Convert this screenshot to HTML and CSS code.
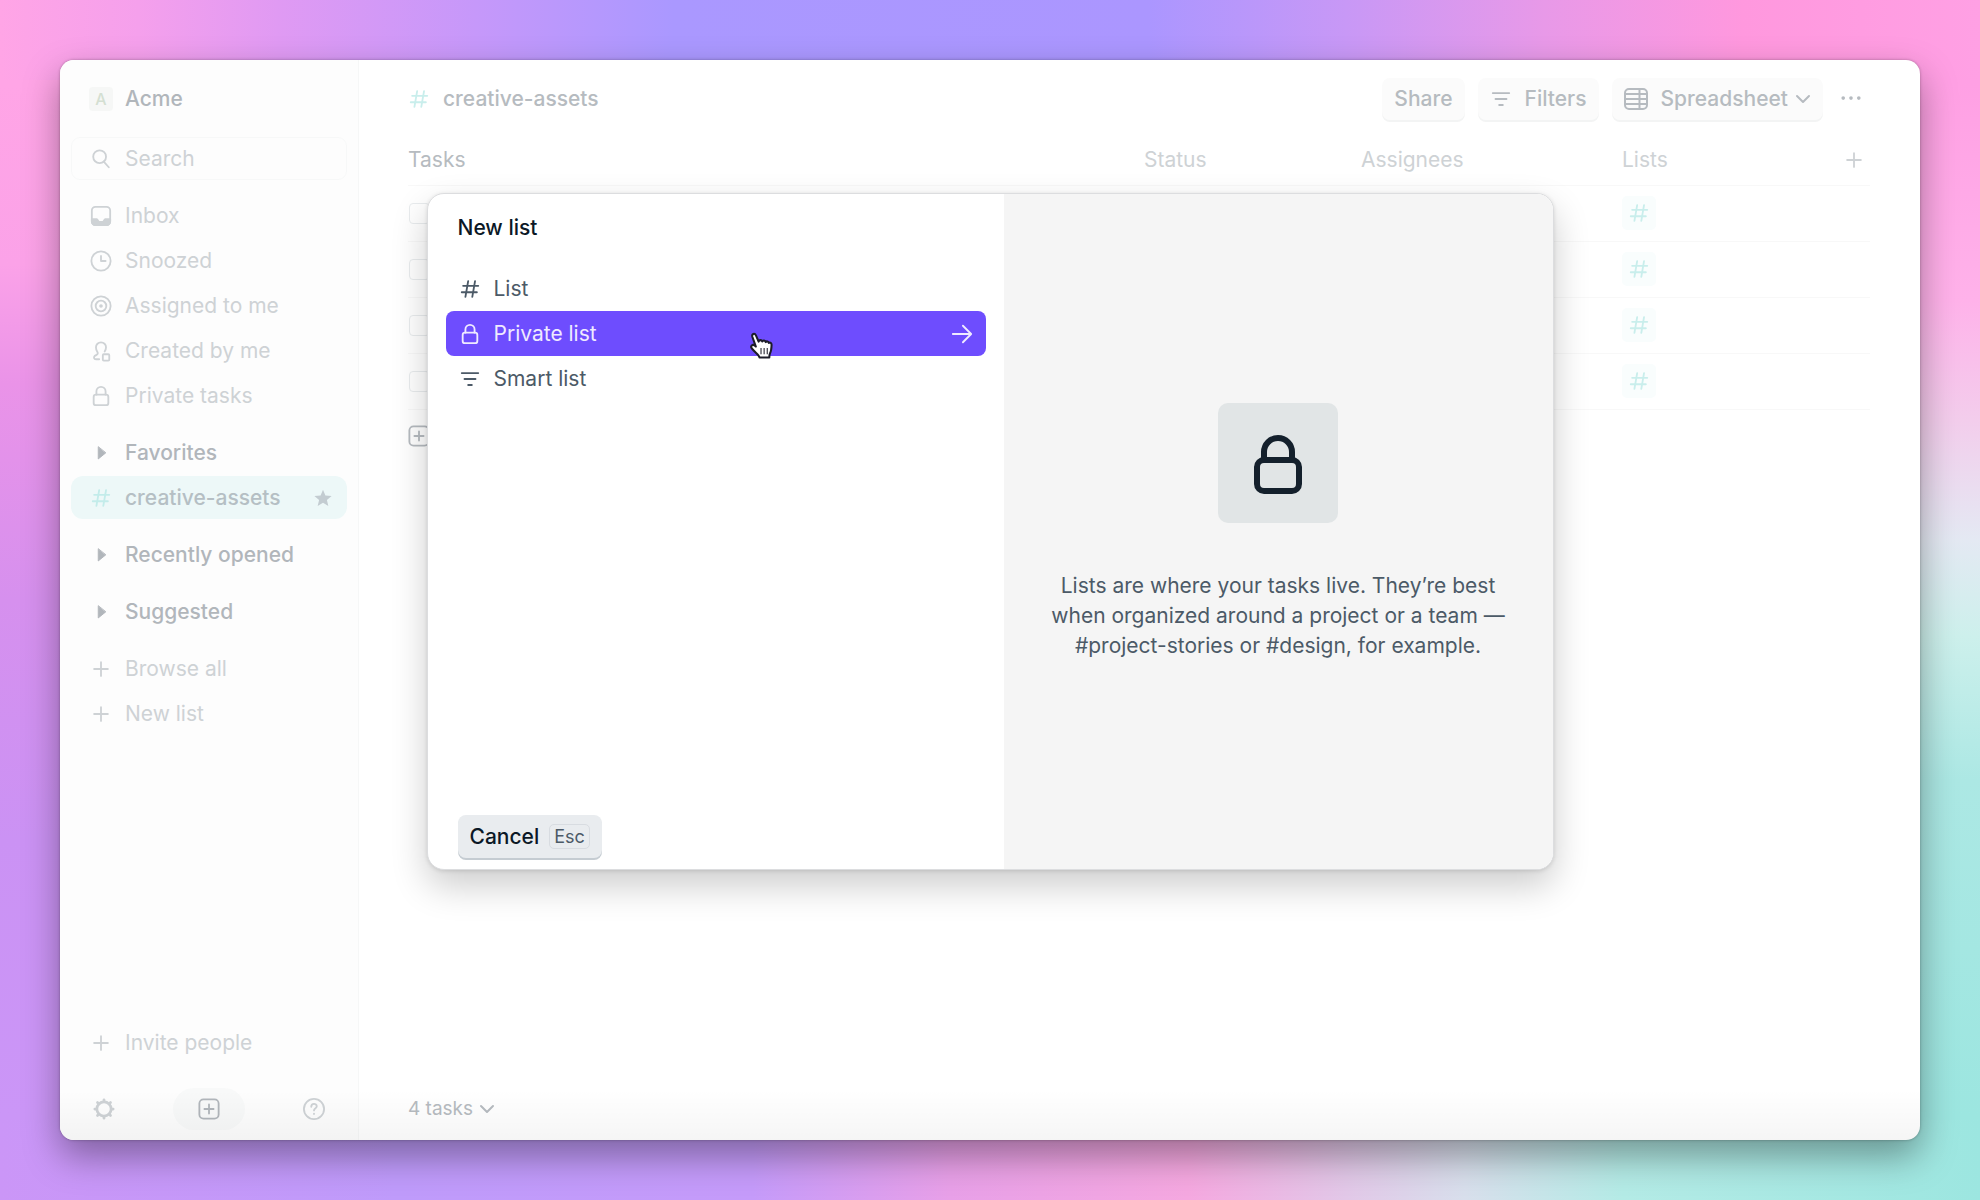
FILE: index.html
```
<!DOCTYPE html>
<html lang="en">
<head>
    <meta charset="UTF-8">
    <title>creative-assets</title>
    <link rel="stylesheet" href="styles.css">
</head>
<body>

    <!-- shared icons -->
    <svg class="sprite" aria-hidden="true">
        <symbol id="hash" viewBox="0 0 24 24"><path d="M10 3.500 7 20.500M17.500 3.500l-3 17M4.500 8.500h16.500M3 15.500h16.500"/></symbol>
        <symbol id="lock" viewBox="0 0 24 24"><rect x="4" y="10.500" width="16" height="11.500" rx="2.500"/><path d="M7 10.500V7a5 5 0 0 1 10 0v3.500"/></symbol>
        <symbol id="filter" viewBox="0 0 24 24"><path d="M3 5.500h18M6 12h12M10 18.500h4"/></symbol>
        <symbol id="plus" viewBox="0 0 24 24"><path d="M12 4.500v15M4.500 12h15"/></symbol>
        <symbol id="plus-box" viewBox="0 0 24 24"><rect x="1.500" y="1.500" width="21" height="21" rx="4.500"/><path d="M12 7v10M7 12h10"/></symbol>
        <symbol id="chevron" viewBox="0 0 16 16"><path d="M2 5l6 6 6-6"/></symbol>
        <symbol id="triangle" viewBox="0 0 24 24"><path d="M9 5.500v13l8-6.500z"/></symbol>
    </svg>

    <div class="window">

        <aside class="sidebar">
            <button class="nav-item workspace"><span class="avatar">A</span>Acme</button>

            <label class="search">
                <svg class="icon" viewBox="0 0 24 24"><circle cx="10.500" cy="9.500" r="7"/><path d="M15 14.800 20.500 21"/></svg>
                <input type="text" placeholder="Search" aria-label="Search">
            </label>

            <nav>
                <a class="nav-item" href="#inbox">
                    <svg class="icon" viewBox="0 0 24 24"><rect x="2" y="2" width="20" height="20" rx="4"/><path class="fill" d="M2 15.500h5.500c1 0 1 3 3 3h3c2 0 2-3 3-3H22V18a4 4 0 0 1-4 4H6a4 4 0 0 1-4-4z"/></svg>
                    Inbox
                </a>
                <a class="nav-item" href="#snoozed">
                    <svg class="icon" viewBox="0 0 24 24"><circle cx="12" cy="12" r="10.500"/><path d="M12 6.500V12h5"/></svg>
                    Snoozed
                </a>
                <a class="nav-item" href="#assigned">
                    <svg class="icon" viewBox="0 0 24 24"><circle cx="12" cy="12" r="10.500"/><circle cx="12" cy="12" r="5.800"/><circle class="fill" cx="12" cy="12" r="1"/></svg>
                    Assigned to me
                </a>
                <a class="nav-item" href="#created">
                    <svg class="icon" viewBox="0 0 24 24"><path d="M10 21H6.500C4 21 4 18.500 5 17.500c1.500-1.300 3.500-1.200 3.500-3 0-1.800-2-2.500-2-6.500a5.500 5.500 0 0 1 11 0c0 2-.5 3-1.500 4.500"/><rect x="14" y="15.500" width="7" height="7" rx="1"/></svg>
                    Created by me
                </a>
                <a class="nav-item" href="#private"><svg class="icon"><use href="#lock"/></svg>Private tasks</a>
            </nav>

            <nav class="group">
                <button class="nav-item heading"><svg class="icon solid"><use href="#triangle"/></svg>Favorites</button>
                <a class="nav-item selected" href="#creative-assets">
                    <svg class="icon teal"><use href="#hash"/></svg>
                    creative-assets
                    <svg class="star" viewBox="0 0 24 24"><path d="M12 1l3.200 7.500 8.300.7-6.300 5.400 1.900 8L12 18.300l-7.100 4.300 1.900-8L.5 9.200l8.300-.7z"/></svg>
                </a>
            </nav>

            <nav class="group">
                <button class="nav-item heading"><svg class="icon solid"><use href="#triangle"/></svg>Recently opened</button>
            </nav>

            <nav class="group">
                <button class="nav-item heading"><svg class="icon solid"><use href="#triangle"/></svg>Suggested</button>
            </nav>

            <nav class="group">
                <a class="nav-item" href="#browse"><svg class="icon"><use href="#plus"/></svg>Browse all</a>
                <button class="nav-item"><svg class="icon"><use href="#plus"/></svg>New list</button>
            </nav>

            <div class="sidebar-bottom">
                <button class="nav-item"><svg class="icon"><use href="#plus"/></svg>Invite people</button>
                <div class="tools">
                    <button aria-label="Settings">
                        <svg class="icon gear" viewBox="0 0 24 24"><circle cx="12" cy="12" r="7.800"/><path d="M12 2v1.500M12 20.500V22M2 12h1.500M20.500 12H22M4.900 4.900l1 1M18.100 18.100l1 1M4.900 19.100l1-1M18.100 5.900l1-1"/></svg>
                    </button>
                    <button class="create" aria-label="Create"><svg class="icon"><use href="#plus-box"/></svg></button>
                    <button aria-label="Help">
                        <svg class="icon" viewBox="0 0 24 24"><circle cx="12" cy="12" r="11"/><path d="M9 9.500c0-4 6-4 6-.5 0 2.500-3 2.500-3 4.500M12 17v.5"/></svg>
                    </button>
                </div>
            </div>
        </aside>

        <main class="content">
            <header class="topbar">
                <h1><svg class="icon teal"><use href="#hash"/></svg>creative-assets</h1>
                <div class="actions">
                    <button class="btn">Share</button>
                    <button class="btn"><svg class="icon"><use href="#filter"/></svg>Filters</button>
                    <button class="btn">
                        <svg class="icon table" viewBox="0 0 24 24"><rect x="1" y="2" width="22" height="20" rx="4"/><path d="M1 7h22M1 12h22M1 17h22M15.500 2v20"/></svg>
                        Spreadsheet
                        <svg class="chevron"><use href="#chevron"/></svg>
                    </button>
                    <button class="more" aria-label="More">
                        <svg class="icon dots" viewBox="0 0 24 24"><circle cx="3.500" cy="11" r="2"/><circle cx="12" cy="11" r="2"/><circle cx="20.500" cy="11" r="2"/></svg>
                    </button>
                </div>
            </header>

            <table class="tasks">
                <thead>
                    <tr>
                        <th class="col-task">Tasks</th>
                        <th class="col-status">Status</th>
                        <th class="col-assignees">Assignees</th>
                        <th class="col-lists">Lists</th>
                        <th class="col-add"><button aria-label="Add column"><svg class="icon"><use href="#plus"/></svg></button></th>
                    </tr>
                </thead>
                <tbody>
                    <tr><td><input type="checkbox" aria-label="Task 1"></td><td></td><td></td><td><span class="chip"><svg class="icon teal"><use href="#hash"/></svg></span></td><td></td></tr>
                    <tr><td><input type="checkbox" aria-label="Task 2"></td><td></td><td></td><td><span class="chip"><svg class="icon teal"><use href="#hash"/></svg></span></td><td></td></tr>
                    <tr><td><input type="checkbox" aria-label="Task 3"></td><td></td><td></td><td><span class="chip"><svg class="icon teal"><use href="#hash"/></svg></span></td><td></td></tr>
                    <tr><td><input type="checkbox" aria-label="Task 4"></td><td></td><td></td><td><span class="chip"><svg class="icon teal"><use href="#hash"/></svg></span></td><td></td></tr>
                </tbody>
            </table>
            <button class="add-task" aria-label="Add task"><svg class="icon"><use href="#plus-box"/></svg></button>

            <button class="count">4 tasks <svg class="chevron"><use href="#chevron"/></svg></button>
        </main>

        <div class="overlay">
            <div class="modal" role="dialog" aria-labelledby="modal-title">
                <div class="modal-left">
                    <h2 id="modal-title">New list</h2>
                    <button class="option"><svg class="icon"><use href="#hash"/></svg>List</button>
                    <button class="option active">
                        <svg class="icon"><use href="#lock"/></svg>
                        Private list
                        <svg class="icon arrow" viewBox="0 0 24 24"><path d="M2 12h19M13 3l9 9-9 9"/></svg>
                        <svg class="cursor" viewBox="0 0 24 28"><path d="M7.500 15 4.200 5.800C3.200 2.800 6.300 1.500 7.600 4.200l2.600 6c.4-1.900 3-1.800 3.500 0 .7-1.500 2.900-1.200 3.300.5.900-1.200 2.700-.8 3.100.8 1.200-.9 2.600 0 2.600 1.800-.1 3.500-.3 6-1.500 8.200-.7 1.300-.7 2.500-.7 4h-9.500c-.5-2.800-4.600-4.800-7.400-8.700-1.800-2.500.9-4.200 2.700-2.800z"/><path class="lines" d="M12.500 16.500v6M15.500 16.500v6M18.500 16.500v6"/></svg>
                    </button>
                    <button class="option"><svg class="icon"><use href="#filter"/></svg>Smart list</button>
                    <button class="cancel">Cancel <kbd>Esc</kbd></button>
                </div>
                <div class="modal-right">
                    <div class="lock-tile"><svg viewBox="0 0 66 66"><rect x="12" y="30" width="42" height="31" rx="7"/><path d="M19 30V22a14 14 0 0 1 28 0v8"/></svg></div>
                    <p>Lists are where your tasks live. They’re best when organized around a project or a team — #project-stories or #design, for example.</p>
                </div>
            </div>
        </div>

    </div>

</body>
</html>
```
FILE: styles.css
```
* {
    box-sizing: border-box;
}

body {
    margin: 0;
    height: 100vh;
    padding: 60px;
    font-family: Inter, sans-serif;
    font-size: 21px;
    line-height: 30px;
    background:
        linear-gradient(90deg, #ffa5e6, #f5a0ec 7%, #e09af3 14%, #c698fa 24%, #aa98ff 34%, #ab96ff 58%, #c898f6 68%, #e899e8 78%, #ff98de 88%, #ffa0e4) top / 100% 80px no-repeat,
        linear-gradient(90deg, #cb96f7, #bf9bfb 20%, #c59bfa 38%, #e8a0e8 48%, #f5a8e0 60%, #e2c8e8 68%, #d8dfec 74%, #b4ebe6 82%, #9ce6e0) bottom / 100% 80px no-repeat,
        linear-gradient(180deg, #ffa0e4 7%, #ffb2ea 25%, #f3cdec 35%, #e4e9f3 45%, #cdf0ec 53%, #ace8e4 65%, #9ce6e0 93%) right / 80px 100% no-repeat,
        linear-gradient(180deg, #ffa5e6 7%, #fba2e8 22%, #ea93e8 32%, #d690ee 50%, #cb92f4 70%, #cb96f7 93%) left / 80px 100% no-repeat;
}

button,
input {
    font: inherit;
    color: inherit;
}

button {
    display: flex;
    align-items: center;
    padding: 0;
    border: none;
    background: none;
    cursor: pointer;
}

a {
    color: inherit;
    text-decoration: none;
}

.sprite {
    display: none;
}

.icon {
    width: 22px;
    height: 22px;
    flex-shrink: 0;
    fill: none;
    stroke: currentColor;
    stroke-width: 2;
    stroke-linecap: round;
    stroke-linejoin: round;
}

.icon .fill,
.icon.solid {
    fill: currentColor;
}

.icon.table {
    width: 24px;
    height: 24px;
}

.icon.teal {
    color: #c9eeec;
}

.chevron {
    width: 16px;
    height: 16px;
    fill: none;
    stroke: currentColor;
    stroke-width: 2;
    stroke-linecap: round;
    stroke-linejoin: round;
}

.window {
    position: relative;
    display: flex;
    height: 100%;
    background: #fff;
    border-radius: 14px;
    box-shadow: 0 16px 36px rgba(0, 0, 0, 0.36), 0 0 3px rgba(0, 0, 0, 0.3);
    overflow: hidden;
}

/* sidebar */
.sidebar {
    display: flex;
    flex-direction: column;
    width: 299px;
    flex-shrink: 0;
    padding: 16px 11px 10px;
    background: #fdfdfd;
    border-right: 1px solid #f6f7f7;
    color: #ced2d5;
}

.nav-item {
    display: flex;
    align-items: center;
    gap: 13px;
    width: 100%;
    height: 45px;
    padding: 0 19px;
}

.nav-item .icon {
    color: #ced2d5;
}

.workspace {
    gap: 12px;
    padding-left: 18px;
    color: #b1b6bb;
    font-weight: 500;
}

.avatar {
    width: 24px;
    height: 24px;
    border-radius: 4px;
    background: #f6f7f6;
    color: #d4dfd2;
    font-size: 16px;
    line-height: 24px;
    text-align: center;
}

.search {
    display: flex;
    align-items: center;
    gap: 13px;
    height: 43px;
    margin: 16px 0 13px;
    padding: 0 18px;
    border: 1px solid #f7f8f8;
    border-radius: 9px;
}

.search input {
    width: 100%;
    padding: 0;
    border: none;
    outline: none;
    background: none;
}

.search input::placeholder {
    color: #ced2d5;
    opacity: 1;
}

.group {
    margin-top: 12px;
}

.heading {
    color: #b1b6bb;
    font-weight: 500;
}

.nav-item .icon.solid {
    color: #b1b6bb;
    stroke-width: 1;
}

.nav-item.selected {
    height: 43px;
    margin: 1px 0;
    padding-right: 15px;
    border-radius: 12px;
    background: #edf8f8;
    color: #b5bfc4;
    font-weight: 500;
}

.nav-item .icon.teal {
    color: #c3ecea;
}

.star {
    width: 18px;
    height: 18px;
    margin-left: auto;
    fill: #c3ccd1;
}

.sidebar-bottom {
    margin-top: auto;
}

.tools {
    display: flex;
    justify-content: space-between;
    padding: 0 22px;
    margin-top: 23px;
    color: #ced2d5;
}

.icon.gear {
    stroke-width: 3;
}

.tools .create {
    width: 72px;
    height: 42px;
    justify-content: center;
    border-radius: 21px;
    background: #f8f9f9;
    color: #b1b6bb;
}

/* main area */
.content {
    display: flex;
    flex-direction: column;
    flex: 1;
    padding: 16px 50px 16px 49px;
    color: #b6bbc0;
}

.topbar {
    display: flex;
    align-items: center;
    justify-content: space-between;
    height: 45px;
}

.topbar h1 {
    display: flex;
    align-items: center;
    gap: 13px;
    margin: 0;
    font-size: 21px;
    font-weight: 500;
}

.actions {
    display: flex;
    align-items: center;
    gap: 13px;
}

.btn {
    gap: 13px;
    height: 42px;
    padding: 0 12px;
    border-radius: 8px;
    background: #fbfbfb;
    box-shadow: 0 2px 0 #f3f4f4;
    font-weight: 500;
}

.btn .chevron {
    margin-left: -6px;
}

.more {
    padding: 0 8px 0 4px;
}

.icon.dots {
    fill: currentColor;
    stroke: none;
}

.tasks {
    width: 100%;
    table-layout: fixed;
    border-collapse: collapse;
    margin-top: 13px;
}

.tasks th {
    height: 51px;
    padding: 2px 0 0;
    border-bottom: 1px solid #f8f8f8;
    color: #ced2d5;
    font-weight: 400;
    text-align: left;
}

.tasks .col-task {
    color: #b6bbc0;
}

.tasks td {
    height: 56px;
    padding: 0;
    border-bottom: 1px solid #f8f8f8;
}

.col-status {
    width: 217px;
}

.col-assignees {
    width: 261px;
}

.col-lists {
    width: 221px;
}

.col-add {
    width: 27px;
}

.tasks input {
    display: block;
    appearance: none;
    width: 21px;
    height: 21px;
    margin: 0 1px;
    border: 1px solid #e9ecee;
    border-radius: 4px;
}

.chip {
    display: flex;
    align-items: center;
    justify-content: center;
    width: 34px;
    height: 34px;
    border-radius: 5px;
    background: #f9fdfd;
}

.add-task {
    width: 22px;
    margin-top: 15px;
}

.count {
    gap: 6px;
    margin-top: auto;
    font-size: 19px;
}

/* new list dialog */
.overlay {
    position: absolute;
    inset: 0;
    display: flex;
    justify-content: center;
    align-items: flex-start;
    padding-top: 133px;
    background: linear-gradient(0deg, rgba(0, 0, 0, 0.04), rgba(0, 0, 0, 0) 50px);
}

.modal {
    display: flex;
    width: 1127px;
    min-height: 677px;
    border: 1px solid #dcdddf;
    border-radius: 17px;
    background: #fff;
    box-shadow: 0 16px 36px rgba(0, 0, 0, 0.2), 0 1px 4px rgba(0, 0, 0, 0.12);
    overflow: hidden;
}

.modal-left {
    display: flex;
    flex-direction: column;
    flex: 0 0 576px;
    padding: 19px 18px 11px;
}

.modal h2 {
    margin: 0 0 23px;
    padding-left: 12px;
    color: #0b1826;
    font-size: 21px;
    font-weight: 500;
}

.option {
    position: relative;
    gap: 13px;
    height: 45px;
    padding: 0 13px;
    border-radius: 8px;
    color: #4c5a67;
}

.option.active {
    background: #6e4dfe;
    color: #efeaff;
}

.arrow {
    margin-left: auto;
}

.cursor {
    position: absolute;
    left: 302px;
    top: 20px;
    width: 25px;
    height: 29px;
    fill: #fff;
    stroke: #1c1c28;
    stroke-width: 2;
    stroke-linejoin: round;
}

.cursor .lines {
    stroke-width: 1;
}

.cancel {
    align-self: flex-start;
    gap: 10px;
    height: 43px;
    margin: auto 0 0 12px;
    padding: 0 12px;
    border-radius: 8px;
    background: #e9ecef;
    box-shadow: 0 2px 0 #c5ccd2;
    color: #0b1826;
    font-weight: 500;
}

.cancel kbd {
    padding: 0 4px;
    border: 1px solid #d8dce1;
    border-radius: 5px;
    color: #4c5a67;
    font-family: inherit;
    font-size: 18px;
    font-weight: 400;
    line-height: 23px;
}

.modal-right {
    display: flex;
    flex-direction: column;
    align-items: center;
    justify-content: center;
    flex: 1;
    padding: 0 45px;
    background: #f5f5f5;
    color: #4c5a67;
    text-align: center;
}

.lock-tile {
    display: flex;
    align-items: center;
    justify-content: center;
    width: 120px;
    height: 120px;
    margin-bottom: 48px;
    border-radius: 10px;
    background: #e1e5e6;
}

.lock-tile svg {
    width: 66px;
    height: 66px;
    fill: none;
    stroke: #14202c;
    stroke-width: 6;
}

.modal-right p {
    margin: 0;
}
```
